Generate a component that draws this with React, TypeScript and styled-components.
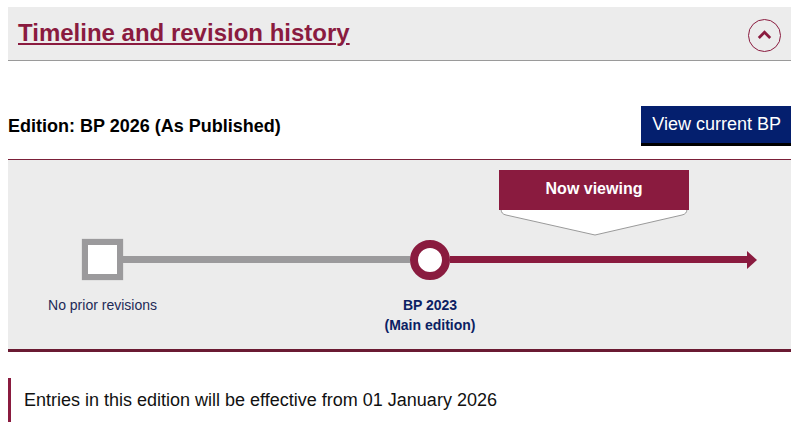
import React from "react";
import styled, { createGlobalStyle } from "styled-components";

const MAROON = "#8a1b3f";
const NAVY = "#041f6e";

const Global = createGlobalStyle`
  html, body { margin: 0; padding: 0; background: #fff; }
  body { font-family: "Liberation Sans", Arial, sans-serif; }
  * { box-sizing: border-box; }
`;

const Page = styled.div`
  padding: 7px 9px 0 8px;
  width: 800px;
`;

const Header = styled.div`
  display: flex;
  align-items: center;
  justify-content: space-between;
  height: 54px;
  padding: 0 10px;
  background: #ececec;
  border-bottom: 1px solid #9a9a9a;
`;

const Title = styled.a`
  font-size: 24px;
  font-weight: 700;
  color: ${MAROON};
  text-decoration: underline;
  text-decoration-thickness: 2px;
  text-underline-offset: 2px;
  margin-top: -1px;
  cursor: pointer;
`;

const ToggleButton = styled.button`
  width: 33px;
  height: 33px;
  border-radius: 50%;
  border: 1.5px solid ${MAROON};
  background: transparent;
  display: flex;
  align-items: center;
  justify-content: center;
  padding: 0 0 2px;
  margin-top: 4px;
  cursor: pointer;
`;

const EditionRow = styled.div`
  display: flex;
  align-items: center;
  justify-content: space-between;
  padding: 45px 0 13px;
`;

const EditionLabel = styled.div`
  font-size: 18px;
  font-weight: 700;
  color: #000;
`;

const PrimaryButton = styled.button`
  height: 40px;
  padding: 0 10px 0 11px;
  background: ${NAVY};
  color: #fff;
  border: none;
  border-bottom: 3px solid #000;
  font-family: "Liberation Sans", Arial, sans-serif;
  font-size: 18px;
  cursor: pointer;
`;

const TimelinePanel = styled.div`
  background: #ececec;
  border-top: 1px solid #7b2039;
  border-bottom: 3px solid #6a1a32;
  padding: 79px 34px 14px 74px;
`;

const Track = styled.div`
  display: flex;
  align-items: flex-start;
`;

const Stop = styled.div<{ $w: number }>`
  width: ${(p) => p.$w}px;
  display: flex;
  flex-direction: column;
  align-items: center;
  flex: none;
`;

const NodeSlot = styled.div`
  height: 41px;
  display: flex;
  align-items: center;
  justify-content: center;
`;

const SquareNode = styled.div`
  width: 41px;
  height: 41px;
  background: #fff;
  border: 6px solid #9b9a9c;
  box-shadow: 0 0 1px rgba(0, 0, 0, 0.25);
`;

const CircleNode = styled.div`
  width: 40px;
  height: 40px;
  border-radius: 50%;
  background: #fff;
  border: 8px solid ${MAROON};
`;

const Label = styled.div<{ $bold?: boolean }>`
  margin-top: 15px;
  white-space: nowrap;
  text-align: center;
  font-size: 14px;
  line-height: 20px;
  font-weight: ${(p) => (p.$bold ? 700 : 400)};
  color: ${(p) => (p.$bold ? "#0b2163" : "#1c2a57")};
`;

const Segment = styled.div<{ $grow: number }>`
  flex: ${(p) => p.$grow} 1 0;
  position: relative;
  height: 41px;
  display: flex;
  align-items: center;
`;

const Line = styled.div<{ $color: string }>`
  flex: 1;
  height: 7px;
  background: ${(p) => p.$color};
`;

const ArrowHead = styled.div`
  width: 0;
  height: 0;
  border-left: 10px solid ${MAROON};
  border-top: 9.5px solid transparent;
  border-bottom: 9.5px solid transparent;
  margin-left: -1px;
`;

const Marker = styled.div`
  position: absolute;
  top: -69px;
  left: 49px;
  width: 190px;
  display: flex;
  flex-direction: column;
`;

const MarkerBox = styled.div`
  height: 40px;
  background: ${MAROON};
  color: #fff;
  font-size: 16px;
  font-weight: 700;
  display: flex;
  align-items: center;
  justify-content: center;
  padding-bottom: 2px;
  position: relative;
  z-index: 1;
`;

const Pointer = styled.svg`
  display: block;
  margin-top: -1px;
`;

const Note = styled.div`
  margin-top: 26px;
  border-left: 3px solid ${MAROON};
  padding: 12px 13px;
  font-size: 18px;
  line-height: 20px;
  color: #111;
`;

export default function App() {
  return (
    <>
      <Global />
      <Page>
        <Header>
          <Title>Timeline and revision history</Title>
          <ToggleButton aria-label="Collapse">
            <svg width="15" height="10" viewBox="0 0 15 10">
              <path d="M1.8 8 L7.5 2.3 L13.2 8" fill="none" stroke={MAROON} strokeWidth="2.8" />
            </svg>
          </ToggleButton>
        </Header>

        <EditionRow>
          <EditionLabel>Edition: BP 2026 (As Published)</EditionLabel>
          <PrimaryButton>View current BP</PrimaryButton>
        </EditionRow>

        <TimelinePanel>
          <Track>
            <Stop $w={41}>
              <NodeSlot>
                <SquareNode />
              </NodeSlot>
              <Label>No prior revisions</Label>
            </Stop>
            <Segment $grow={287}>
              <Line $color="#9b9a9c" />
            </Segment>
            <Stop $w={40}>
              <NodeSlot>
                <CircleNode />
              </NodeSlot>
              <Label $bold>
                BP 2023
                <br />
                (Main edition)
              </Label>
            </Stop>
            <Segment $grow={307}>
              <Line $color={MAROON} />
              <ArrowHead />
              <Marker>
                <MarkerBox>Now viewing</MarkerBox>
                <Pointer width="190" height="27" viewBox="0 0 190 27">
                  <path d="M2 0 Q2 5 7 6 L96 26 L183 6 Q188 5 188 0 Z" fill="#fff" />
                  <path d="M2 0 Q2 5 7 6 L96 26 L183 6 Q188 5 188 0" fill="none" stroke="#9a9a9a" strokeWidth="1" />
                </Pointer>
              </Marker>
            </Segment>
          </Track>
        </TimelinePanel>

        <Note>Entries in this edition will be effective from 01 January 2026</Note>
      </Page>
    </>
  );
}
